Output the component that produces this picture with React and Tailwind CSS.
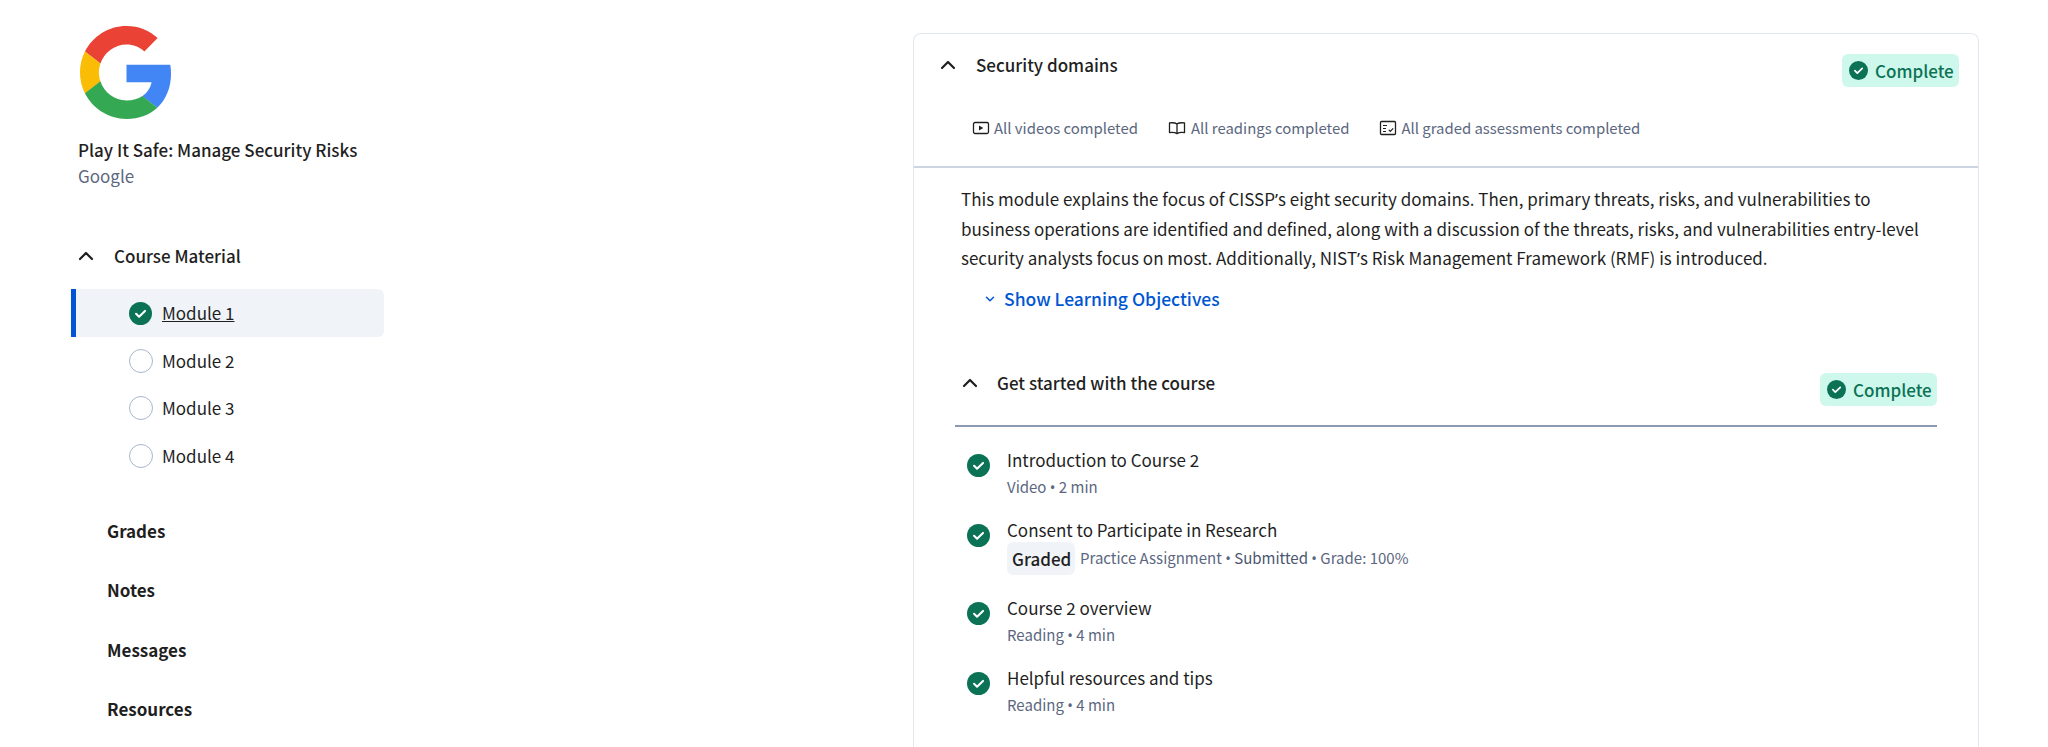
import { ChevronUp, ChevronDown } from 'lucide-react';

const font = { fontFamily: '"Noto Sans CJK SC", "Source Sans Pro", "Noto Sans", sans-serif' };

// the CJK font sets these two as full-width glyphs, so they get a latin face
const Apos = () => <span className="font-['Noto_Sans']">’</span>;
const Dot = () => <span className="font-['Noto_Sans']">•</span>;

const CheckCircle = ({ className }) => (
  <svg viewBox="0 0 24 24" className={className}>
    <circle cx="12" cy="12" r="12" fill="#0b7256" />
    <path d="M7.4 12.3l3.1 3 6.2-6" fill="none" stroke="#fff" strokeWidth="2.2" strokeLinecap="round" strokeLinejoin="round" />
  </svg>
);

const GoogleLogo = () => (
  <svg viewBox="0 0 48 48" className="w-[93px] h-[93px] ml-[2px]">
    <path fill="#EA4335" d="M24 9.5c3.54 0 6.71 1.22 9.21 3.6l6.85-6.85C35.9 2.38 30.47 0 24 0 14.62 0 6.51 5.38 2.56 13.22l7.98 6.19C12.43 13.72 17.74 9.5 24 9.5z" />
    <path fill="#4285F4" d="M46.98 24.55c0-1.57-.15-3.09-.38-4.55H24v9.02h12.94c-.58 2.96-2.26 5.48-4.78 7.18l7.73 6c4.51-4.18 7.09-10.36 7.09-17.65z" />
    <path fill="#FBBC05" d="M10.53 28.59c-.48-1.45-.76-2.99-.76-4.59s.27-3.14.76-4.59l-7.98-6.19C.92 16.46 0 20.12 0 24c0 3.88.92 7.54 2.56 10.78l7.97-6.19z" />
    <path fill="#34A853" d="M24 48c6.48 0 11.93-2.13 15.89-5.81l-7.73-6c-2.15 1.45-4.92 2.3-8.16 2.3-6.26 0-11.57-4.22-13.47-9.91l-7.98 6.19C6.51 42.62 14.62 48 24 48z" />
  </svg>
);

const StatusBadge = () => (
  <div className="flex items-center gap-[7px] h-[33px] w-[117px] pl-[7px] bg-[#cef8eb] rounded-[6px] text-[17px] leading-[24px] font-medium text-[#0b7256]">
    <CheckCircle className="w-[19px] h-[19px]" />
    <span>Complete</span>
  </div>
);

const VideoIcon = () => (
  <svg viewBox="0 0 18 18" className="w-[18px] h-[18px]" fill="none">
    <rect x="1.5" y="3.5" width="15" height="11" rx="1.5" stroke="#1f1f1f" strokeWidth="1.3" />
    <path d="M7 6.4v5.2l4.3-2.6z" fill="#1f1f1f" />
  </svg>
);

const BookIcon = () => (
  <svg viewBox="0 0 18 18" className="w-[18px] h-[18px]" fill="none">
    <path d="M9 5C7.6 3.9 4.6 3.6 1.5 3.9v9.7c3.1-.3 6.1 0 7.5 1.1 1.4-1.1 4.4-1.4 7.5-1.1V3.9C13.4 3.6 10.4 3.9 9 5zM9 5v9.7" stroke="#1f1f1f" strokeWidth="1.3" strokeLinejoin="round" />
  </svg>
);

const AssessmentIcon = () => (
  <svg viewBox="0 0 18 18" className="w-[18px] h-[18px]" fill="none">
    <rect x="1.5" y="2.5" width="15" height="13" rx="1" stroke="#1f1f1f" strokeWidth="1.3" />
    <path d="M4 6.5h4M4 9.5h3M4 12.5h3" stroke="#1f1f1f" strokeWidth="1.2" />
    <path d="M9.8 10.8l1.5 1.5 2.9-3" stroke="#1f1f1f" strokeWidth="1.2" />
  </svg>
);

const modules = ['Module 2', 'Module 3', 'Module 4'];
const navLinks = ['Grades', 'Notes', 'Messages', 'Resources'];

const Sidebar = () => (
  <aside className="w-[313px] ml-[71px] shrink-0 pt-[26px]">
    <div className="pl-[7px]">
      <GoogleLogo />
      <h2 className="mt-[19px] text-[17px] leading-[24px] font-medium text-[#1f1f1f]">Play It Safe: Manage Security Risks</h2>
      <p className="mt-[2px] text-[17px] leading-[24px] text-[#5b6780]">Google</p>
    </div>

    <div className="mt-[56px] flex items-center h-[24px] pl-[3px]">
      <ChevronUp size={24} strokeWidth={2.2} className="text-[#1f1f1f] w-[24px]" />
      <span className="ml-[16px] text-[17px] font-medium text-[#1f1f1f]">Course Material</span>
    </div>

    <div className="mt-[21px] flex items-center h-[48px] border-l-[5px] border-[#0056d2] bg-[#f0f4f9] rounded-r-[6px] pl-[53px]">
      <CheckCircle className="w-[23px] h-[23px]" />
      <span className="ml-[10px] text-[17px] leading-[24px] text-[#1f1f1f] underline">Module 1</span>
    </div>
    {modules.map((m) => (
      <div key={m} className="flex items-center h-[47.5px] pl-[58px]">
        <div className="w-[24px] h-[24px] rounded-full border border-[#a9b6cd] shrink-0" />
        <span className="ml-[9px] text-[17px] leading-[24px] text-[#1f1f1f]">{m}</span>
      </div>
    ))}

    <nav className="mt-[39px] flex flex-col gap-[35.5px] pl-[36px]">
      {navLinks.map((l) => (
        <div key={l} className="text-[17px] leading-[24px] font-bold text-[#1f1f1f]">{l}</div>
      ))}
    </nav>
  </aside>
);

const LessonRow = ({ title, meta, graded }) => (
  <div className="flex mt-[21px]">
    <CheckCircle className="w-[23px] h-[23px] mt-[6px] shrink-0" />
    <div className="ml-[17px]">
      <div className="text-[17px] leading-[24px] text-[#1f1f1f]">{title}</div>
      {graded ? (
        <div className="flex items-center mt-[-1px] text-[15px] leading-[33px] text-[#5b6780]">
          <span className="bg-[#f0f4f9] rounded-[6px] h-[33px] w-[68px] pl-[5px] text-[17px] font-medium text-[#1f1f1f]">Graded</span>
          <span className="ml-[5px]">Practice Assignment <Dot /> <span className="text-[#4a5670]">Submitted</span> <Dot /> Grade: 100%</span>
        </div>
      ) : (
        <div className="mt-[5px] text-[15px] leading-[20px] text-[#5b6780]">{meta}</div>
      )}
    </div>
  </div>
);

const ModuleCard = () => (
  <section className="w-[1066px] h-[714px] ml-[529px] mt-[33px] border border-[#e3e8f0] border-b-0 rounded-t-[8px] bg-white shrink-0 overflow-hidden">
    <header className="h-[134px] border-b-2 border-[#cdd4e2] pl-[18px] pr-[19px]">
      <div className="flex justify-between pt-[20px]">
        <div className="flex items-center h-[22px] pl-[4px]">
          <ChevronUp size={24} strokeWidth={2.2} className="text-[#1f1f1f]" />
          <span className="ml-[16px] text-[17px] font-medium text-[#1f1f1f]">Security domains</span>
        </div>
        <StatusBadge />
      </div>
      <div className="flex items-center mt-[29px] ml-[40px] text-[14.9px] leading-[24px] text-[#5b6780]">
        <VideoIcon />
        <span className="ml-[4px]">All videos completed</span>
        <span className="ml-[30px]"><BookIcon /></span>
        <span className="ml-[5px]">All readings completed</span>
        <span className="ml-[30px]"><AssessmentIcon /></span>
        <span className="ml-[4px]">All graded assessments completed</span>
      </div>
    </header>

    <div className="pl-[47px] pr-[40px] pt-[16px] text-[17px] leading-[29px] text-[#1f1f1f]">
      <p>
        This module explains the focus of CISSP<Apos />s eight security domains. Then, primary threats, risks, and vulnerabilities to<br />
        business operations are identified and defined, along with a discussion of the threats, risks, and vulnerabilities entry-level<br />
        security analysts focus on most. Additionally, NIST<Apos />s Risk Management Framework (RMF) is introduced.
      </p>
      <div className="flex items-center mt-[11px] ml-[22px] text-[17.5px] font-medium text-[#0056d2]">
        <ChevronDown size={14} strokeWidth={2.5} />
        <span className="ml-[7px]">Show Learning Objectives</span>
      </div>
    </div>

    <div className="ml-[41px] w-[982px] mt-[60px]">
      <div className="flex justify-between h-[52px]">
        <div className="flex items-center h-[20px] pl-[3px]">
          <ChevronUp size={24} strokeWidth={2.2} className="text-[#1f1f1f]" />
          <span className="ml-[15px] text-[17px] font-medium text-[#1f1f1f]">Get started with the course</span>
        </div>
        <StatusBadge />
      </div>
      <div className="h-[2px] bg-[#8a9ab5]" />
      <div className="pl-[12px]">
        <LessonRow title="Introduction to Course 2" meta={<>Video <Dot /> 2 min</>} />
        <LessonRow title="Consent to Participate in Research" graded />
        <LessonRow title="Course 2 overview" meta={<>Reading <Dot /> 4 min</>} />
        <LessonRow title="Helpful resources and tips" meta={<>Reading <Dot /> 4 min</>} />
      </div>
    </div>
  </section>
);

export default function App() {
  return (
    <div className="flex w-[2048px] h-[747px] bg-white overflow-hidden" style={font}>
      <Sidebar />
      <ModuleCard />
    </div>
  );
}
